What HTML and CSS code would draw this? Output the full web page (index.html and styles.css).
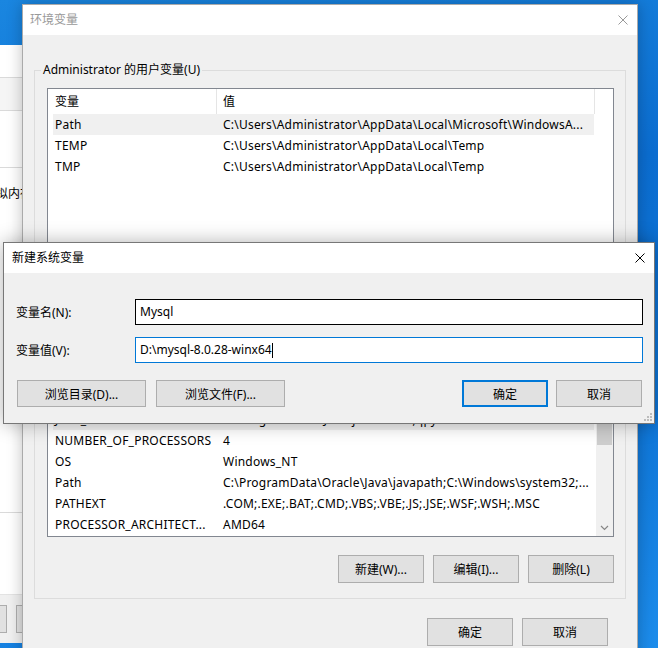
FILE: index.html
```html
<!DOCTYPE html>
<html lang="zh-CN">
  <head>
    <meta charset="UTF-8" />
    <meta name="viewport" content="width=device-width, initial-scale=1.0" />
    <title>环境变量</title>
    <link rel="stylesheet" href="styles.css">
  </head>
  <body>
    <div class="desktop">
      <!-- system properties window, mostly hidden behind -->
      <div class="window bg-window">
        <div class="bg-head"></div>
        <div class="bg-tabs"></div>
        <div class="bg-section"></div>
        <div class="bg-group">
          <p class="bg-text">处理器计划，内存使用，以及虚拟内存</p>
        </div>
        <div class="bg-blank"></div>
        <div class="bg-footer">
          <button class="btn bg-btn"></button>
          <button class="btn bg-btn"></button>
        </div>
      </div>

      <!-- environment variables dialog -->
      <div class="window env-window">
        <div class="titlebar inactive">
          <span class="title">环境变量</span>
          <svg class="close" width="10" height="10" viewBox="0 0 10 10">
            <path d="M0.5 0.5 L9.5 9.5 M9.5 0.5 L0.5 9.5" />
          </svg>
        </div>
        <div class="window-body">
          <fieldset class="group">
            <legend>Administrator 的用户变量(U)</legend>
            <div class="listview user-list">
              <div class="lv-header">
                <span class="hd-name">变量</span>
                <span class="hd-value">值</span>
              </div>
              <div class="lv-rows">
                <div class="lv-row selected">
                  <span class="col-name">Path</span>
                  <span class="col-value">C:\Users\Administrator\AppData\Local\Microsoft\WindowsA...</span>
                </div>
                <div class="lv-row">
                  <span class="col-name">TEMP</span>
                  <span class="col-value">C:\Users\Administrator\AppData\Local\Temp</span>
                </div>
                <div class="lv-row">
                  <span class="col-name">TMP</span>
                  <span class="col-value">C:\Users\Administrator\AppData\Local\Temp</span>
                </div>
              </div>
            </div>
            <div class="btn-row">
              <button class="btn">新建(N)...</button>
              <button class="btn">编辑(E)...</button>
              <button class="btn">删除(D)</button>
            </div>
          </fieldset>

          <fieldset class="group">
            <legend>系统变量(S)</legend>
            <div class="listview sys-list">
              <div class="lv-header">
                <span class="hd-name">变量</span>
                <span class="hd-value">值</span>
              </div>
              <div class="lv-body">
                <div class="lv-rows to-bottom">
                  <div class="lv-row selected">
                    <span class="col-name">JAVA_HOME</span>
                    <span class="col-value">C:\Program Files\Java\jdk-17.0.2 ;qpy</span>
                  </div>
                  <div class="lv-row">
                    <span class="col-name">NUMBER_OF_PROCESSORS</span>
                    <span class="col-value">4</span>
                  </div>
                  <div class="lv-row">
                    <span class="col-name">OS</span>
                    <span class="col-value">Windows_NT</span>
                  </div>
                  <div class="lv-row">
                    <span class="col-name">Path</span>
                    <span class="col-value">C:\ProgramData\Oracle\Java\javapath;C:\Windows\system32;...</span>
                  </div>
                  <div class="lv-row">
                    <span class="col-name">PATHEXT</span>
                    <span class="col-value">.COM;.EXE;.BAT;.CMD;.VBS;.VBE;.JS;.JSE;.WSF;.WSH;.MSC</span>
                  </div>
                  <div class="lv-row">
                    <span class="col-name">PROCESSOR_ARCHITECT...</span>
                    <span class="col-value">AMD64</span>
                  </div>
                </div>
                <div class="scrollbar">
                  <div class="thumb"></div>
                  <svg class="arrow" width="17" height="17" viewBox="0 0 17 17">
                    <path d="M5 7 L8.5 10.5 L12 7" />
                  </svg>
                </div>
              </div>
            </div>
            <div class="btn-row">
              <button class="btn">新建(W)...</button>
              <button class="btn">编辑(I)...</button>
              <button class="btn">删除(L)</button>
            </div>
          </fieldset>

          <div class="dialog-buttons">
            <button class="btn">确定</button>
            <button class="btn">取消</button>
          </div>
        </div>
      </div>

      <!-- new system variable dialog -->
      <div class="window new-var">
        <div class="titlebar">
          <span class="title">新建系统变量</span>
          <svg class="close" width="10" height="10" viewBox="0 0 10 10">
            <path d="M0.5 0.5 L9.5 9.5 M9.5 0.5 L0.5 9.5" />
          </svg>
        </div>
        <div class="new-var-body">
          <div class="form-grid">
            <label class="field-label">变量名(N):</label>
            <div class="textbox">Mysql</div>
            <label class="field-label">变量值(V):</label>
            <div class="textbox focused">D:\mysql-8.0.28-winx64<span class="caret"></span></div>
          </div>
          <div class="new-var-buttons">
            <button class="btn wide">浏览目录(D)...</button>
            <button class="btn wide">浏览文件(F)...</button>
            <span class="spacer"></span>
            <button class="btn default">确定</button>
            <button class="btn">取消</button>
          </div>
        </div>
        <svg class="grip" width="9" height="9" viewBox="0 0 9 9">
          <rect x="7" y="0" width="2" height="2" />
          <rect x="4" y="3" width="2" height="2" />
          <rect x="7" y="3" width="2" height="2" />
          <rect x="1" y="6" width="2" height="2" />
          <rect x="4" y="6" width="2" height="2" />
          <rect x="7" y="6" width="2" height="2" />
        </svg>
      </div>
    </div>
  </body>
</html>
```

FILE: styles.css
```css
* {
  box-sizing: border-box;
}

body {
  margin: 0;
  width: 658px;
  height: 648px;
  overflow: hidden;
  font-family: "Noto Sans", "Noto Sans CJK SC", sans-serif;
  font-size: 12px;
  color: #000;
}

.desktop {
  position: relative;
  width: 658px;
  height: 648px;
  overflow: hidden;
  background: linear-gradient(170deg, #1a86e0 0%, #0b6dd0 35%, #0f76d8 70%, #1c8ceb 100%);
}

.window {
  position: absolute;
}

/* background window */
.bg-window {
  left: -400px;
  top: 45px;
  width: 500px;
  height: 598px;
  background-color: #fff;
  display: flex;
  flex-direction: column;
}

.bg-head {
  height: 33px;
  border-bottom: 1px solid #dadada;
}

.bg-tabs {
  height: 33px;
  background-color: #f5f5f5;
  border-bottom: 1px solid #dadada;
}

.bg-section {
  height: 57px;
  border-bottom: 1px solid #dadada;
}

.bg-group {
  height: 345px;
  border-bottom: 1px solid #dadada;
}

.bg-text {
  margin: 18px 0 0;
  padding-right: 68px;
  text-align: right;
  line-height: 16px;
}

.bg-blank {
  height: 81px;
}

.bg-footer {
  flex: 1;
  background-color: #f0f0f0;
  border-top: 1px solid #e3e3e3;
  padding: 10px 9px 0 0;
  display: flex;
  justify-content: flex-end;
  align-items: flex-start;
  gap: 9px;
}

.bg-btn {
  width: 75px;
  height: 28px;
}

/* title bars */
.titlebar {
  height: 30px;
  background-color: #fff;
  display: flex;
  align-items: center;
  justify-content: space-between;
}

.titlebar .title {
  line-height: 16px;
}

.titlebar .close {
  margin-right: 9px;
  stroke: #000;
  stroke-width: 1;
  fill: none;
}

.titlebar.inactive .title {
  color: #999;
}

.titlebar.inactive .close {
  stroke: #999;
}

/* environment variables window */
.env-window {
  left: 22px;
  top: 4px;
  width: 616px;
  height: 660px;
  background-color: #f0f0f0;
  border: 1px solid #aaa;
  box-shadow: 0 0 14px rgba(0, 0, 0, 0.25);
}

.env-window .titlebar {
  padding-left: 7px;
}

.window-body {
  padding: 0 11px;
}

.group {
  margin: 0;
  min-width: 0;
  border: 1px solid #dcdcdc;
  padding: 10px 11px 15px 12px;
}

.group:first-child {
  margin-top: 27px;
}

.group + .group {
  margin-top: 8px;
}

.group legend {
  margin-left: -6px;
  padding: 0 2px;
  line-height: 16px;
}

.listview {
  background-color: #fff;
  border: 1px solid #828790;
  display: flex;
  flex-direction: column;
}

.user-list {
  height: 184px;
}

.sys-list {
  height: 169px;
}

.lv-header {
  height: 25px;
  display: flex;
  flex-shrink: 0;
}

.lv-header span {
  line-height: 25px;
  border-right: 1px solid #e5e5e5;
}

.hd-name {
  width: 169px;
  padding-left: 7px;
}

.hd-value {
  width: 378px;
  padding-left: 6px;
}

.lv-rows {
  padding-left: 5px;
}

.lv-row {
  width: 541px;
  height: 21px;
  display: flex;
  line-height: 21px;
  white-space: nowrap;
  letter-spacing: 0.22px;
}

.lv-row.selected {
  background-color: #f0f0f0;
}

.col-name {
  width: 168px;
  padding-left: 2px;
  flex-shrink: 0;
}

.col-value {
  padding-left: 2px;
}

.lv-body {
  flex: 1;
  min-height: 0;
  display: flex;
}

.lv-rows.to-bottom {
  flex: 1;
  display: flex;
  flex-direction: column;
  justify-content: flex-end;
  overflow: hidden;
  padding-bottom: 1px;
}

.lv-rows.to-bottom .lv-row {
  flex-shrink: 0;
}

.scrollbar {
  width: 17px;
  background-color: #f0f0f0;
  display: flex;
  flex-direction: column;
  justify-content: flex-end;
  align-items: center;
}

.scrollbar .thumb {
  width: 15px;
  height: 40px;
  background-color: #cdcdcd;
  margin-bottom: 74px;
}

.scrollbar .arrow {
  fill: none;
  stroke: #868686;
  stroke-width: 1.2;
}

.btn {
  font-family: inherit;
  font-size: 12px;
  color: #000;
  background-color: #e1e1e1;
  border: 1px solid #adadad;
  border-radius: 0;
  padding: 0;
  margin: 0;
}

.btn-row {
  margin-top: 18px;
  display: flex;
  justify-content: flex-end;
  gap: 9px;
}

.btn-row .btn {
  width: 86px;
  height: 28px;
}

.dialog-buttons {
  margin-top: 19px;
  margin-right: 18px;
  display: flex;
  justify-content: flex-end;
  gap: 9px;
}

.dialog-buttons .btn {
  width: 86px;
  height: 28px;
}

/* new system variable dialog */
.new-var {
  left: 3px;
  top: 242px;
  width: 652px;
  height: 182px;
  background-color: #f0f0f0;
  border: 1px solid #777;
  box-shadow: 0 0 18px rgba(0, 0, 0, 0.3);
}

.new-var .titlebar {
  padding-left: 8px;
}

.new-var-body {
  padding: 26px 11px 0 12px;
}

.form-grid {
  display: grid;
  grid-template-columns: 119px 1fr;
  grid-auto-rows: 26px;
  row-gap: 12px;
  align-items: center;
}

.textbox {
  height: 26px;
  background-color: #fff;
  border: 1px solid #000;
  padding-left: 4px;
  line-height: 24px;
  display: flex;
  align-items: center;
}

.textbox.focused {
  border-color: #0078d7;
}

.caret {
  display: inline-block;
  width: 1px;
  height: 15px;
  background-color: #000;
}

.new-var-buttons {
  margin-top: 17px;
  padding: 0 1px;
  display: flex;
  gap: 10px;
}

.new-var-buttons .btn {
  width: 86px;
  height: 27px;
}

.new-var-buttons .btn.wide {
  width: 129px;
}

.new-var-buttons .spacer {
  flex: 1;
}

.new-var-buttons .btn + .btn:last-child {
  margin-left: -2px;
}

.btn.default {
  border: 2px solid #0078d7;
}

.grip {
  position: absolute;
  right: 2px;
  bottom: 1px;
  fill: #bcbcbc;
}
```
